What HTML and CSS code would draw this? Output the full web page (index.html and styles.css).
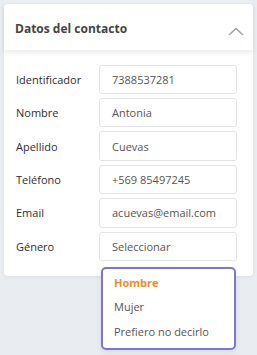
FILE: index.html
```html
<!DOCTYPE html>
<html lang="es">
<head>
    <meta charset="UTF-8">
    <meta name="viewport" content="width=device-width, initial-scale=1.0">
    <title>Datos del contacto</title>
    <link rel="stylesheet" href="styles.css">
</head>
<body>
    <div class="card">
        <div class="card-header">
            <h2>Datos del contacto</h2>
            <svg class="chevron" width="16" height="9" viewBox="0 0 16 9">
                <path d="M1 8 L8 1.5 L15 8" fill="none" stroke="#9a9ea4" stroke-width="1.3"/>
            </svg>
        </div>
        <div class="card-body">
            <div class="row">
                <label>Identificador</label>
                <div class="field">7388537281</div>
            </div>
            <div class="row">
                <label>Nombre</label>
                <div class="field">Antonia</div>
            </div>
            <div class="row">
                <label>Apellido</label>
                <div class="field">Cuevas</div>
            </div>
            <div class="row">
                <label>Teléfono</label>
                <div class="field">+569 85497245</div>
            </div>
            <div class="row">
                <label>Email</label>
                <div class="field">acuevas@email.com</div>
            </div>
            <div class="row">
                <label>Género</label>
                <div class="field select">
                    Seleccionar
                    <ul class="menu">
                        <li class="active">Hombre</li>
                        <li>Mujer</li>
                        <li>Prefiero no decirlo</li>
                    </ul>
                </div>
            </div>
        </div>
    </div>
</body>
</html>
```

FILE: styles.css
```css
body {
    margin: 0;
    padding: 4px 4px 0 4px;
    background-color: #e9edf2;
    font-family: "Open Sans", Arial, sans-serif;
    color: #333;
    width: 257px;
    height: 355px;
    box-sizing: border-box;
    overflow: hidden;
}
.card {
    width: 249px;
    background-color: #fff;
    border-radius: 4px;
    box-shadow: 0 1px 4px rgba(0, 0, 0, 0.06);
}
.card-header {
    height: 46px;
    display: flex;
    align-items: center;
    justify-content: space-between;
    padding: 2px 9px 0 11px;
    box-sizing: border-box;
    box-shadow: 0 3px 5px rgba(0, 0, 0, 0.08);
    position: relative;
}
.card-header h2 {
    margin: 0;
    font-size: 12px;
    font-weight: 700;
    color: #444;
}
.chevron {
    margin-top: 6px;
}
.card-body {
    padding: 14.7px 16px 15px 12px;
    display: flex;
    flex-direction: column;
    gap: 4px;
}
.row {
    display: flex;
    align-items: center;
    height: 29.4px;
}
.row label {
    width: 83px;
    font-size: 11px;
    color: #2e2e2e;
}
.field {
    flex: 1;
    height: 29.4px;
    box-sizing: border-box;
    border: 1px solid #e2e4e8;
    border-radius: 3px;
    padding: 0 12px;
    display: flex;
    align-items: center;
    font-size: 11px;
    color: #555;
}
.select {
    position: relative;
}
.menu {
    position: absolute;
    top: 34.6px;
    left: 1px;
    width: 135px;
    height: 82.4px;
    box-sizing: border-box;
    margin: 0;
    padding: 1.5px 0 0 11px;
    list-style: none;
    background-color: #fff;
    border: 2px solid #8073d8;
    border-radius: 5px;
    box-shadow: 0 2px 6px rgba(0, 0, 0, 0.08);
}
.menu li {
    height: 24.7px;
    line-height: 24.7px;
    font-size: 11px;
    color: #555;
}
.menu li.active {
    color: #f58a2c;
    font-weight: 700;
}
```
